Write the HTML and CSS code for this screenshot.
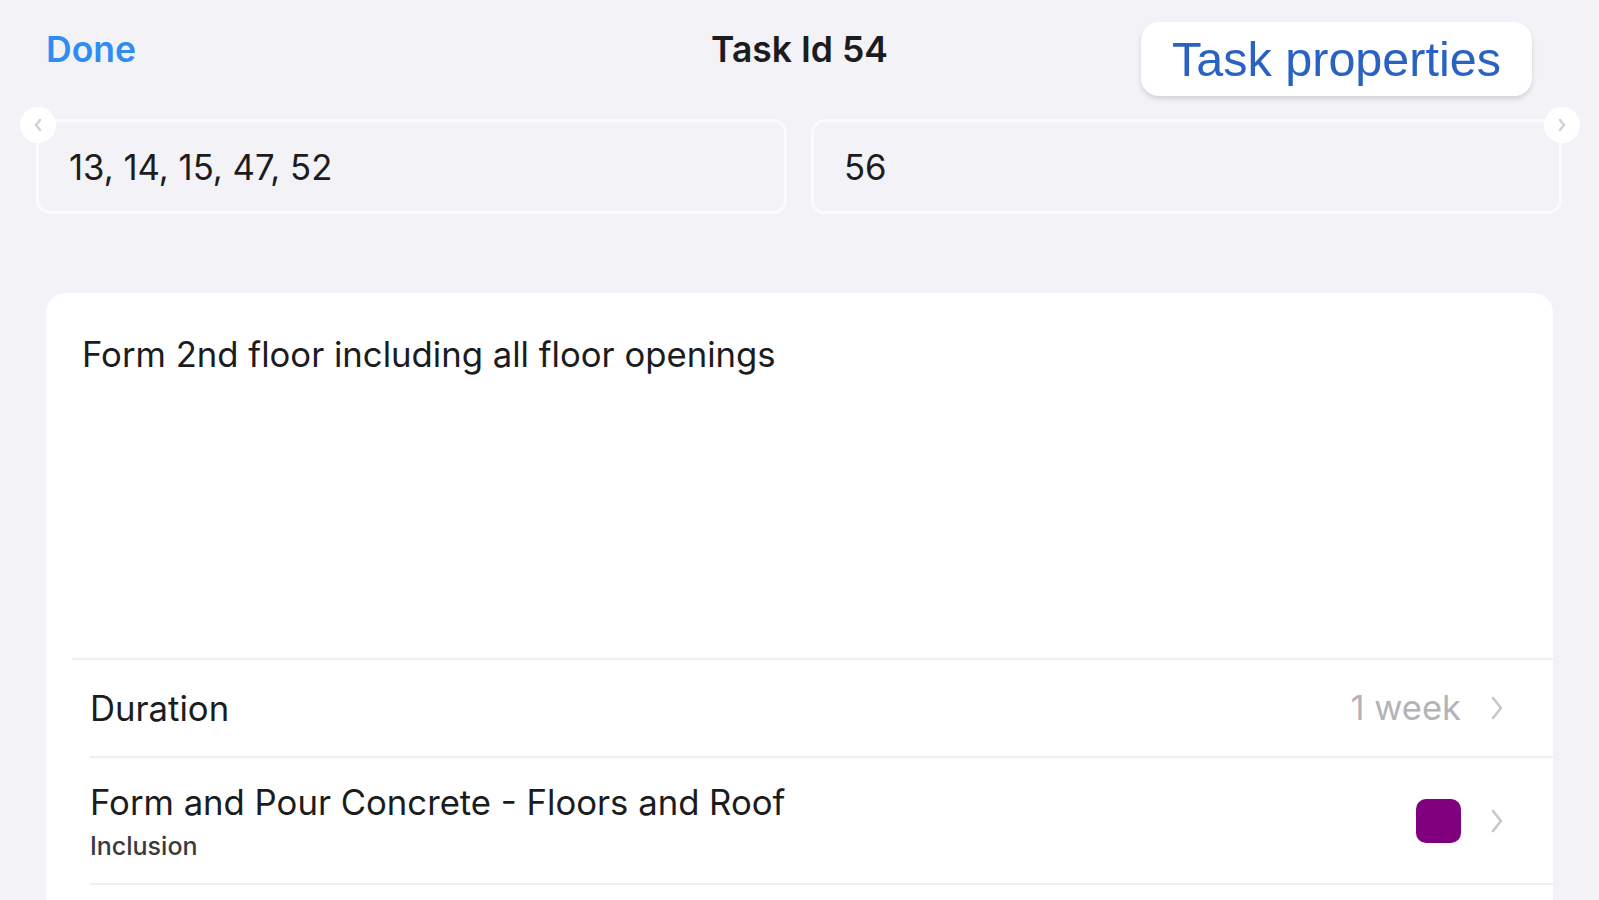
FILE: index.html
```html
<!DOCTYPE html>
<html lang="en">
<head>
<meta charset="utf-8">
<title>Task Id 54</title>
<link rel="stylesheet" href="styles.css">
</head>
<body>
<div class="screen">
  <header class="nav">
    <div class="nav-left"><span class="done">Done</span></div>
    <div class="nav-title">Task Id 54</div>
    <div class="nav-right"><button class="props" type="button">Task properties</button></div>
  </header>

  <div class="fields">
    <div class="field">13, 14, 15, 47, 52</div>
    <div class="field">56</div>
    <span class="corner corner-left">
      <svg width="10" height="14" viewBox="0 0 10 14"><polyline points="7,2 3,7 7,12" fill="none" stroke="#d2d2d6" stroke-width="2.5" stroke-linecap="round" stroke-linejoin="round"/></svg>
    </span>
    <span class="corner corner-right">
      <svg width="10" height="14" viewBox="0 0 10 14"><polyline points="3,2 7,7 3,12" fill="none" stroke="#d2d2d6" stroke-width="2.5" stroke-linecap="round" stroke-linejoin="round"/></svg>
    </span>
  </div>

  <section class="card">
    <div class="notes">Form 2nd floor including all floor openings</div>
    <div class="list">
      <div class="row row-duration">
        <span class="row-label">Duration</span>
        <span class="row-value">1 week</span>
        <svg class="chev" width="16" height="26" viewBox="0 0 16 26"><polyline points="4,3 12,13 4,23" fill="none" stroke="#c7c7cc" stroke-width="2.6" stroke-linecap="round" stroke-linejoin="round"/></svg>
      </div>
      <div class="row row-category">
        <div class="row-text">
          <span class="row-label">Form and Pour Concrete - Floors and Roof</span>
          <span class="row-sub">Inclusion</span>
        </div>
        <span class="swatch"></span>
        <svg class="chev" width="16" height="26" viewBox="0 0 16 26"><polyline points="4,3 12,13 4,23" fill="none" stroke="#c7c7cc" stroke-width="2.6" stroke-linecap="round" stroke-linejoin="round"/></svg>
      </div>
    </div>
  </section>
</div>
</body>
</html>
```

FILE: styles.css
```css
* { box-sizing: border-box; }

html, body {
  margin: 0;
  padding: 0;
  background: #f2f2f7;
}

body {
  width: 1599px;
  height: 900px;
  overflow: hidden;
  font-family: Inter, "Liberation Sans", Arial, sans-serif;
  color: #1c1c1e;
}

.screen {
  width: 1599px;
  height: 900px;
}

/* Navigation bar */
.nav {
  display: grid;
  grid-template-columns: 1fr auto 1fr;
  align-items: start;
  height: 119px;
  padding-top: 22px;
}

.nav-left {
  padding-left: 46px;
}

.done,
.nav-title {
  display: block;
  margin-top: 10px;
  font-size: 35.5px;
  line-height: 36px;
  font-weight: 600;
}

.done {
  color: #2f8cf2;
}

.nav-title {
  color: #1c1c1e;
}

.nav-right {
  display: flex;
  justify-content: flex-end;
  padding-right: 67px;
}

.props {
  width: 391px;
  height: 74px;
  border: none;
  border-radius: 18px;
  background: #ffffff;
  box-shadow: 0 3px 5px rgba(0, 0, 0, 0.13);
  font-family: "Liberation Sans", Arial, sans-serif;
  font-size: 48.5px;
  line-height: 74px;
  font-weight: 400;
  color: #2a62c4;
  padding: 0;
}

/* Predecessor / successor fields */
.fields {
  position: relative;
  display: flex;
  gap: 24px;
  padding: 0 37px 0 36px;
}

.field {
  flex: 1;
  height: 95px;
  border: 3px solid #fbfbfd;
  border-radius: 14px;
  padding-left: 30px;
  display: flex;
  align-items: center;
  font-size: 34.7px;
  color: #1c1c1e;
}

.corner {
  position: absolute;
  top: -12px;
  width: 36px;
  height: 36px;
  border-radius: 50%;
  background: #ffffff;
  display: flex;
  align-items: center;
  justify-content: center;
}

.corner-left { left: 20px; }
.corner-right { right: 19px; }

/* Card */
.card {
  margin: 79px 46px 0;
  height: 700px;
  background: #ffffff;
  border-radius: 20px;
}

.notes {
  height: 365px;
  padding: 41px 36px 0;
  font-size: 34.7px;
  line-height: 40px;
  color: #1c1c1e;
}

.list {
  margin-left: 26px;
  border-top: 2px solid #efeff2;
}

.row {
  margin-left: 18px;
  display: flex;
  align-items: center;
  padding-right: 48px;
  border-bottom: 2px solid #efeff2;
}

.row-duration {
  height: 98px;
}

.row-category {
  height: 127px;
}

.row-label {
  font-size: 34.7px;
  line-height: 40px;
  color: #1c1c1e;
}

.row-duration .row-label {
  flex: 1;
}

.row-value {
  font-size: 34.5px;
  line-height: 40px;
  color: #b3b3b8;
}

.row-text {
  flex: 1;
  display: flex;
  flex-direction: column;
  gap: 10px;
}

.row-sub {
  font-size: 25px;
  line-height: 28px;
  font-weight: 500;
  color: #3a3a3c;
}

.swatch {
  width: 45px;
  height: 44px;
  border-radius: 10px;
  background: #800080;
}

.chev {
  margin-left: 28px;
  flex: none;
}
```
